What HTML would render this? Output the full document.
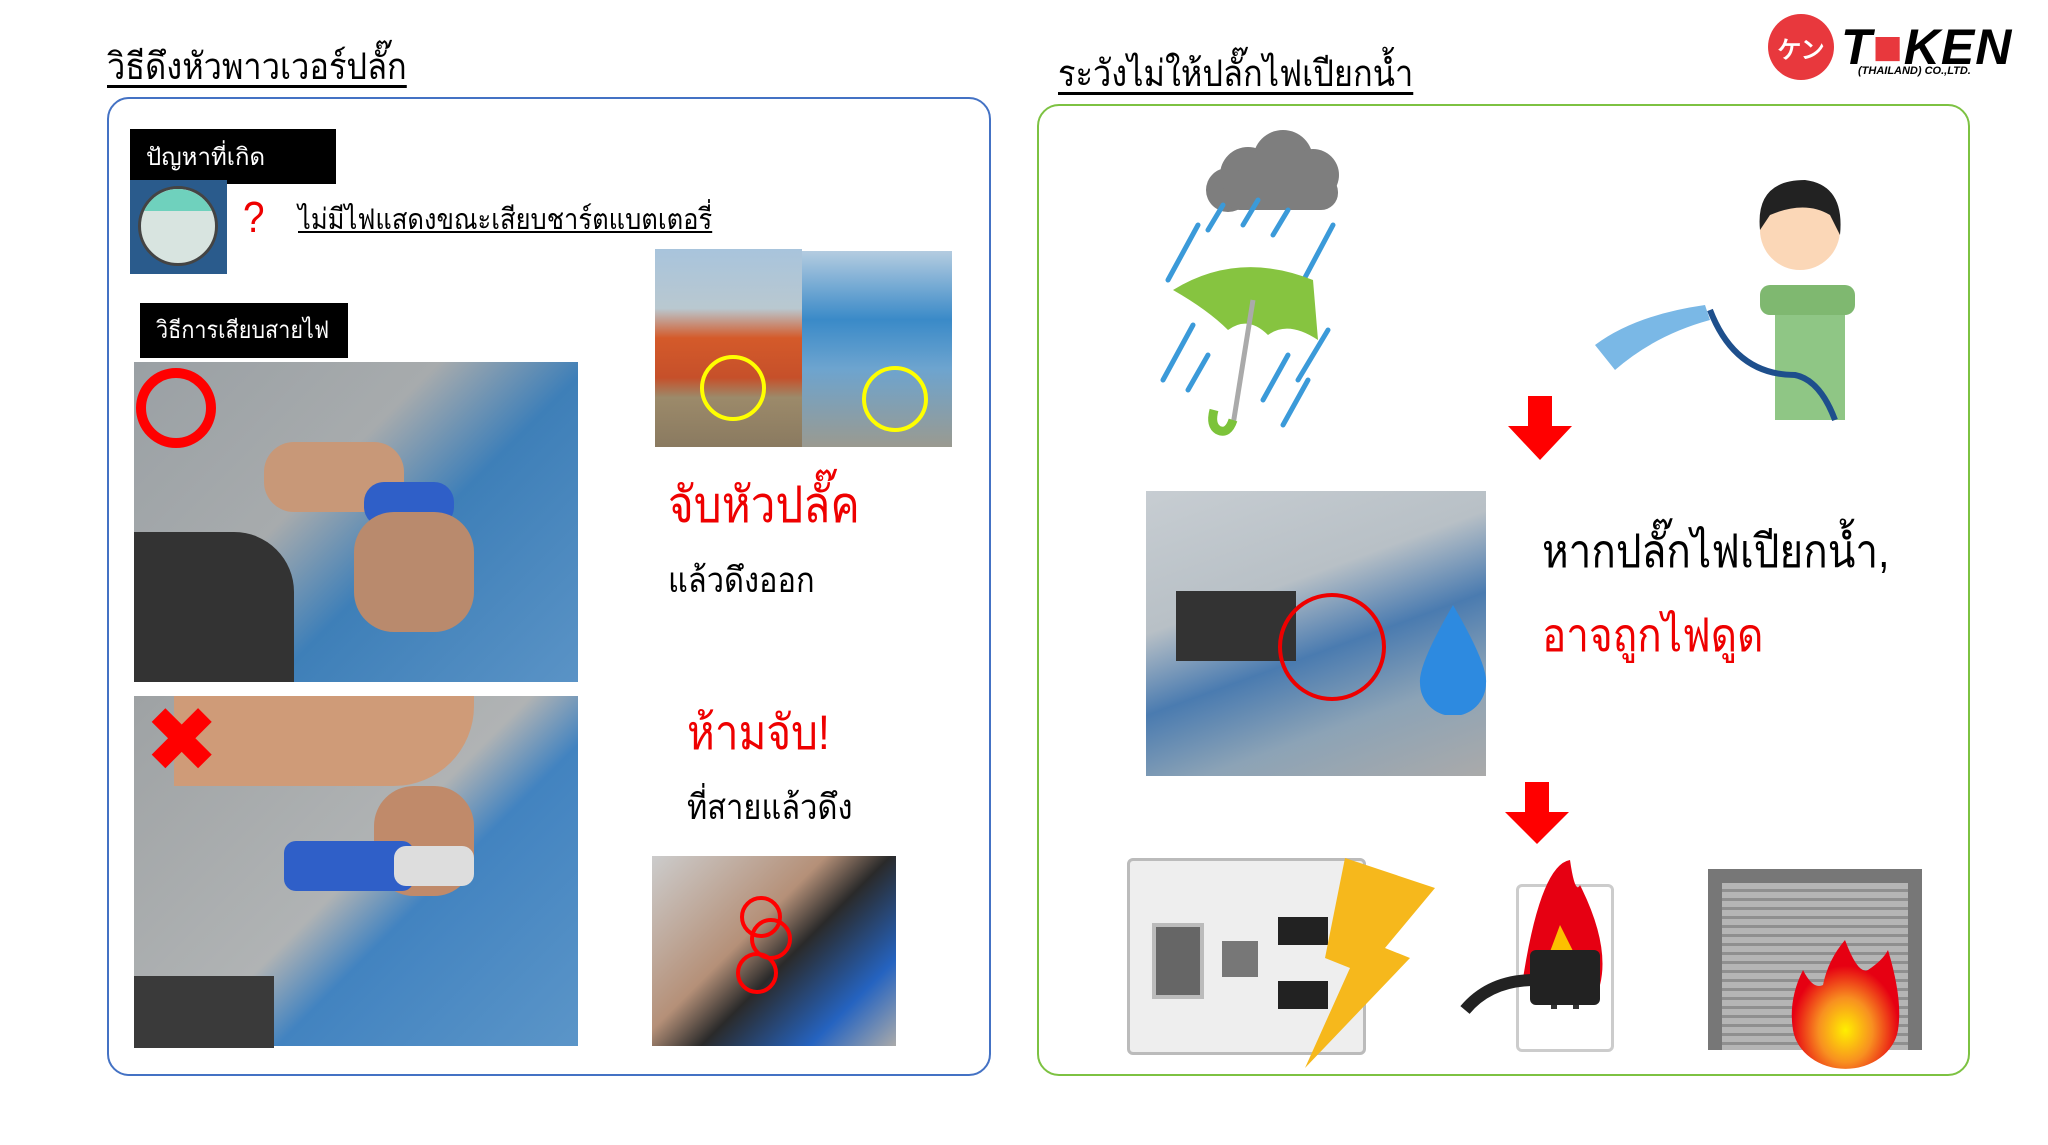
<!DOCTYPE html>
<html><head><meta charset="utf-8"><style>
body{margin:0;width:2048px;height:1145px;background:#fff;position:relative;overflow:hidden;font-family:"Liberation Sans","DejaVu Sans",sans-serif}
.a{position:absolute}
.t{white-space:nowrap;line-height:1;transform:scaleX(0.88);transform-origin:0 0}
.blk{background:#000;color:#fff;font-size:24px;padding-left:16px;box-sizing:border-box;display:flex;align-items:center;white-space:nowrap}
</style></head><body>
<div class="a t" style="left:107px;top:48px;font-size:37px;text-decoration:underline;text-underline-offset:6px">วิธีดึงหัวพาวเวอร์ปลั๊ก</div>
<div class="a t" style="left:1058px;top:55px;font-size:37px;text-decoration:underline;text-underline-offset:6px">ระวังไม่ให้ปลั๊กไฟเปียกน้ำ</div>
<div class="a" style="left:1768px;top:14px;width:66px;height:66px;border-radius:50%;background:#e8383d;color:#fff;font-size:24px;font-weight:bold;display:flex;align-items:center;justify-content:center">ケン</div>
<div class="a t" style="left:1841px;top:22px;font-size:50px;font-weight:bold;font-style:italic;letter-spacing:1px;transform:none">T<span style="color:#e8383d">■</span>KEN</div>
<div class="a t" style="left:1858px;top:66px;font-size:11px;font-weight:bold;font-style:italic;transform:none">(THAILAND) CO.,LTD.</div>
<div class="a" style="left:107px;top:97px;width:880px;height:975px;border:2px solid #4472c4;border-radius:22px"></div>
<div class="a" style="left:1037px;top:104px;width:929px;height:968px;border:2px solid #7dc242;border-radius:22px"></div>
<div class="a blk" style="left:130px;top:129px;width:206px;height:55px">ปัญหาที่เกิด</div>
<div class="a" style="left:130px;top:180px;width:97px;height:94px;background:#2a5b8c"><div class="a" style="left:8px;top:6px;width:80px;height:80px;border-radius:50%;background:#d8e4e0;border:3px solid #444;box-sizing:border-box;overflow:hidden"><div style="height:22px;background:#6fd1bd"></div></div></div>
<div class="a t" style="left:243px;top:196px;font-size:44px;color:#e00">?</div>
<div class="a t" style="left:298px;top:206px;font-size:29px;text-decoration:underline">ไม่มีไฟแสดงขณะเสียบชาร์ตแบตเตอรี่</div>
<div class="a blk" style="left:140px;top:303px;width:208px;height:55px"><span class="t" style="transform:scaleX(.9)">วิธีการเสียบสายไฟ</span></div>
<div class="a" style="left:134px;top:362px;width:444px;height:320px;background:linear-gradient(135deg,#9aa0a4 0%,#a7abad 40%,#3e7fb8 60%,#5a93c6 100%)">
 <div class="a" style="left:130px;top:80px;width:140px;height:70px;background:#c89878;border-radius:30px"></div>
 <div class="a" style="left:230px;top:120px;width:90px;height:45px;background:#2f5fc8;border-radius:20px"></div>
 <div class="a" style="left:220px;top:150px;width:120px;height:120px;background:#b98a6d;border-radius:40px"></div>
 <div class="a" style="left:0;top:170px;width:160px;height:150px;background:#333;border-radius:0 60px 0 0"></div>
 <div class="a" style="left:2px;top:6px;width:60px;height:60px;border:10px solid #f00;border-radius:50%"></div>
</div>
<div class="a" style="left:134px;top:696px;width:444px;height:350px;background:linear-gradient(135deg,#9ea2a4 0%,#b0b3b4 50%,#4283c0 62%,#5b95c8 100%)">
 <div class="a" style="left:40px;top:0;width:300px;height:90px;background:#cf9b78;border-radius:0 0 80px 0"></div>
 <div class="a" style="left:240px;top:90px;width:100px;height:110px;background:#c08a6a;border-radius:40px"></div>
 <div class="a" style="left:150px;top:145px;width:130px;height:50px;background:#2f5fc8;border-radius:12px"></div>
 <div class="a" style="left:260px;top:150px;width:80px;height:40px;background:#ddd;border-radius:12px"></div>
 <div class="a" style="left:0;top:280px;width:140px;height:72px;background:#3a3a3a"></div>
 <div class="a t" style="left:10px;top:0;font-size:90px;color:#f00;font-weight:bold;transform:none">✖</div>
</div>
<div class="a" style="left:655px;top:249px;width:147px;height:198px;background:linear-gradient(#a8c4dc 0%,#b9c8d0 30%,#d45a2a 45%,#c6502a 65%,#9c8a6a 75%,#8a7a60 100%)"><div class="a" style="left:45px;top:106px;width:58px;height:58px;border:4px solid #ff0;border-radius:50%"></div></div>
<div class="a" style="left:802px;top:251px;width:150px;height:196px;background:linear-gradient(#b4cce0 0%,#3a8ac8 35%,#6da4cf 60%,#9a9a90 100%)"><div class="a" style="left:60px;top:115px;width:58px;height:58px;border:4px solid #ff0;border-radius:50%"></div></div>
<div class="a t" style="left:668px;top:480px;font-size:50px;color:#e00">จับหัวปลั๊ค</div>
<div class="a t" style="left:668px;top:563px;font-size:35px">แล้วดึงออก</div>
<div class="a t" style="left:687px;top:710px;font-size:48px;color:#e00">ห้ามจับ!</div>
<div class="a t" style="left:687px;top:790px;font-size:35px">ที่สายแล้วดึง</div>
<div class="a" style="left:652px;top:856px;width:244px;height:190px;background:linear-gradient(135deg,#ccc 0%,#b59078 40%,#2a2a2a 55%,#2563c0 80%,#aaa 100%)">
 <div class="a" style="left:88px;top:40px;width:34px;height:34px;border:4px solid #f00;border-radius:50%"></div>
 <div class="a" style="left:98px;top:62px;width:34px;height:34px;border:4px solid #f00;border-radius:50%"></div>
 <div class="a" style="left:84px;top:96px;width:34px;height:34px;border:4px solid #f00;border-radius:50%"></div>
</div>
<svg class="a" style="left:1148px;top:130px" width="300" height="310" viewBox="0 0 300 310">
 <g fill="#7e7e7e"><circle cx="100" cy="45" r="28"/><circle cx="135" cy="30" r="30"/><circle cx="165" cy="45" r="26"/><circle cx="80" cy="60" r="22"/><rect x="75" y="45" width="115" height="35" rx="17"/></g>
 <g stroke="#3b9ad9" stroke-width="5" stroke-linecap="round">
  <path d="M20 150L50 95M60 100L75 75M95 95L110 70M125 105L140 80M145 170L185 95M15 250L45 195M40 260L60 225M115 270L140 225M135 295L160 250M150 250L180 200"/></g>
 <path d="M25 160Q90 120 165 150L170 210Q140 190 120 205Q100 185 80 200Q60 180 25 160Z" fill="#86c440"/>
 <path d="M105 170L85 295" stroke="#aaa" stroke-width="5"/>
 <path d="M85 290Q80 305 70 300Q62 295 66 280" stroke="#7cc33a" stroke-width="9" fill="none"/>
</svg>
<svg class="a" style="left:1595px;top:175px" width="260" height="250" viewBox="0 0 260 250">
 <path d="M0 170Q40 140 110 130L115 145Q60 160 20 195Z" fill="#7ab8e6"/>
 <rect x="180" y="120" width="70" height="125" fill="#8fc685"/>
 <rect x="165" y="110" width="95" height="30" rx="10" fill="#7fb870"/>
 <circle cx="205" cy="55" r="40" fill="#fbd7b7"/>
 <path d="M165 55Q160 5 210 5Q250 10 245 60L235 40Q210 25 175 40Z" fill="#222"/>
 <path d="M115 135Q140 200 200 200Q225 205 240 245" stroke="#1e4f8c" stroke-width="6" fill="none"/>
</svg>
<svg class="a" style="left:1508px;top:396px" width="64" height="64"><path d="M20 0H44V30H64L32 64L0 30H20Z" fill="#f00"/></svg>
<div class="a" style="left:1146px;top:491px;width:340px;height:285px;background:linear-gradient(160deg,#c7cdd2 0%,#b8c0c6 35%,#4a7bb0 55%,#8ca3b6 75%,#aaa 100%)">
 <div class="a" style="left:30px;top:100px;width:120px;height:70px;background:#333"></div>
 <div class="a" style="left:132px;top:102px;width:100px;height:100px;border:4px solid #e00;border-radius:50%"></div>
</div>
<svg class="a" style="left:1418px;top:605px" width="70" height="110"><path d="M35 0Q70 60 68 78A33 33 0 0 1 2 78Q0 60 35 0Z" fill="#2d8ae0"/></svg>
<div class="a t" style="left:1542px;top:528px;font-size:46px">หากปลั๊กไฟเปียกน้ำ,</div>
<div class="a t" style="left:1542px;top:612px;font-size:46px;color:#e00">อาจถูกไฟดูด</div>
<svg class="a" style="left:1505px;top:782px" width="64" height="62"><path d="M20 0H44V30H64L32 62L0 30H20Z" fill="#f00"/></svg>
<div class="a" style="left:1127px;top:858px;width:239px;height:197px;background:#eee;border:3px solid #bbb;box-sizing:border-box;border-radius:6px">
 <div class="a" style="left:22px;top:62px;width:44px;height:68px;background:#666;border:4px solid #bbb"></div>
 <div class="a" style="left:92px;top:80px;width:36px;height:36px;background:#777"></div>
 <div class="a" style="left:148px;top:56px;width:50px;height:28px;background:#222"></div>
 <div class="a" style="left:148px;top:120px;width:50px;height:28px;background:#222"></div>
</div>
<svg class="a" style="left:1285px;top:858px" width="150" height="210"><path d="M60 0L150 30L100 90L125 100L20 210L65 110L40 100Z" fill="#f6b81c"/></svg>
<div class="a" style="left:1516px;top:884px;width:98px;height:168px;background:#fff;border:3px solid #ccc;border-radius:6px;box-sizing:border-box">
 <div class="a" style="left:32px;top:100px;width:6px;height:22px;background:#333"></div><div class="a" style="left:54px;top:100px;width:6px;height:22px;background:#333"></div></div>
<svg class="a" style="left:1460px;top:855px" width="150" height="160"><path d="M62 130Q80 10 110 5Q115 40 120 30Q150 90 140 130Z" fill="#e60012"/><path d="M85 110L100 70L120 110Z" fill="#fcc000"/><rect x="70" y="95" width="70" height="55" rx="6" fill="#222"/><path d="M75 125Q30 125 5 155" stroke="#222" stroke-width="12" fill="none"/></svg>
<div class="a" style="left:1708px;top:869px;width:214px;height:181px;background:#777"><div class="a" style="left:14px;top:14px;width:186px;height:167px;background:repeating-linear-gradient(#b5b5b5 0 6px,#8f8f8f 6px 9px)"></div></div>
<svg class="a" style="left:1788px;top:940px" width="115" height="130"><defs><radialGradient id="g" cx="50%" cy="70%" r="50%"><stop offset="0" stop-color="#ffef00"/><stop offset="0.5" stop-color="#f89020"/><stop offset="1" stop-color="#e60012"/></radialGradient></defs><path d="M57 0Q70 35 80 30Q95 20 100 10Q115 60 110 90A53 45 0 0 1 5 90Q0 60 15 30Q25 50 35 45Q40 20 57 0Z" fill="url(#g)"/></svg>
</body></html>
